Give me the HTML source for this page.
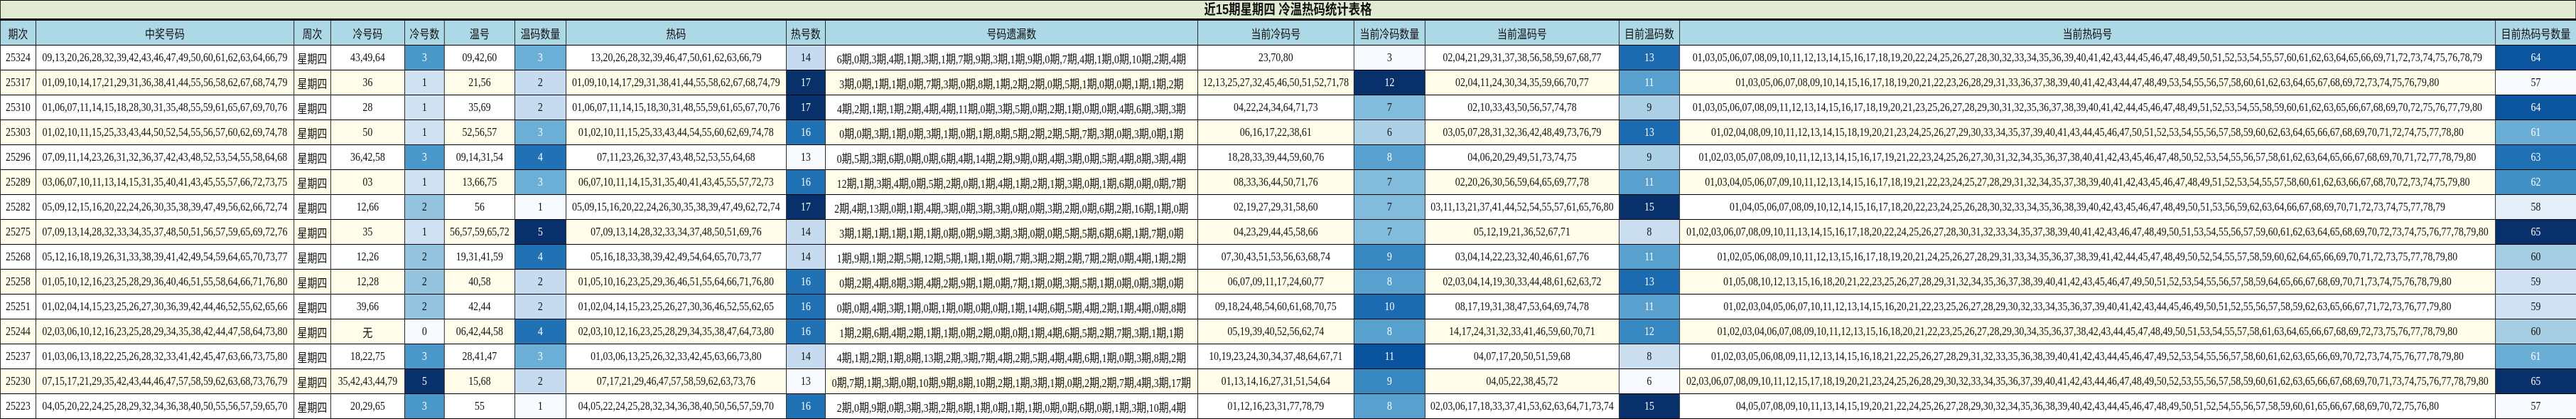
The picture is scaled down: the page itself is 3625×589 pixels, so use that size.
<!DOCTYPE html>
<html><head><meta charset="utf-8">
<style>
html,body{margin:0;padding:0;background:#fff;}
body{width:3625px;height:589px;overflow:hidden;position:relative;font-family:"Liberation Serif","Noto Sans CJK SC",serif;color:#111;}
#wrap{position:absolute;left:0;top:0;width:4420.7px;transform:scaleX(0.82);transform-origin:0 0;}
.title{height:26px;background:#e2ebd2;border:1px solid #000;border-bottom:2px solid #000;box-sizing:border-box;height:28px;text-align:center;font-weight:bold;font-size:20px;line-height:26px;font-family:"Liberation Sans","Noto Sans CJK SC",sans-serif;}
table{border-collapse:collapse;table-layout:fixed;width:4420.7px;}
td,th{border:1px solid #000;text-align:center;font-size:17px;padding:0;white-space:nowrap;overflow:hidden;height:34px;}
th{background:#add8e6;font-weight:normal;font-family:"Liberation Sans","Noto Sans CJK SC",sans-serif;height:34px;}
tr.y td{background:#fffde9;}
td.w{color:#fff;}
</style></head><body>
<div id="wrap">
<div class="title">近15期星期四 冷温热码统计表格</div>
<table>
<colgroup>
<col style="width:61px"><col style="width:442.7px"><col style="width:63.4px"><col style="width:126.8px"><col style="width:68.3px"><col style="width:120.7px"><col style="width:87.8px"><col style="width:378px"><col style="width:67.1px"><col style="width:639px"><col style="width:268.3px"><col style="width:122px"><col style="width:333px"><col style="width:103.7px"><col style="width:1400px"><col style="width:139px">
</colgroup>
<tr><th>期次</th><th>中奖号码</th><th>周次</th><th>冷号码</th><th>冷号数</th><th>温号</th><th>温码数量</th><th>热码</th><th>热号数</th><th>号码遗漏数</th><th>当前冷码号</th><th>当前冷码数量</th><th>当前温码号</th><th>目前温码数</th><th>当前热码号</th><th>目前热码号数量</th></tr>

<tr><td>25324</td><td>09,13,20,26,28,32,39,42,43,46,47,49,50,60,61,62,63,64,66,79</td><td>星期四</td><td>43,49,64</td><td class="w" style="background:#4a98c9">3</td><td>09,42,60</td><td class="w" style="background:#6baed6">3</td><td>13,20,26,28,32,39,46,47,50,61,62,63,66,79</td><td style="background:#c6dbef">14</td><td>6期,0期,3期,4期,1期,3期,1期,7期,9期,3期,1期,9期,0期,7期,4期,1期,0期,10期,2期,4期</td><td>23,70,80</td><td style="background:#f7fbff">3</td><td>02,04,21,29,31,37,38,56,58,59,67,68,77</td><td class="w" style="background:#1c6bb0">13</td><td>01,03,05,06,07,08,09,10,11,12,13,14,15,16,17,18,19,20,22,24,25,26,27,28,30,32,33,34,35,36,39,40,41,42,43,44,45,46,47,48,49,50,51,52,53,54,55,57,60,61,62,63,64,65,66,69,71,72,73,74,75,76,78,79</td><td class="w" style="background:#0b559f">64</td></tr>

<tr class="y"><td>25317</td><td>01,09,10,14,17,21,29,31,36,38,41,44,55,56,58,62,67,68,74,79</td><td>星期四</td><td>36</td><td style="background:#d0e1f2">1</td><td>21,56</td><td style="background:#c6dbef">2</td><td>01,09,10,14,17,29,31,38,41,44,55,58,62,67,68,74,79</td><td class="w" style="background:#08306b">17</td><td>3期,0期,1期,1期,0期,7期,3期,0期,8期,1期,2期,2期,0期,5期,1期,0期,0期,1期,1期,2期</td><td>12,13,25,27,32,45,46,50,51,52,71,78</td><td class="w" style="background:#08306b">12</td><td>02,04,11,24,30,34,35,59,66,70,77</td><td class="w" style="background:#58a1cf">11</td><td>01,03,05,06,07,08,09,10,14,15,16,17,18,19,20,21,22,23,26,28,29,31,33,36,37,38,39,40,41,42,43,44,47,48,49,53,54,55,56,57,58,60,61,62,63,64,65,67,68,69,72,73,74,75,76,79,80</td><td style="background:#f7fbff">57</td></tr>

<tr><td>25310</td><td>01,06,07,11,14,15,18,28,30,31,35,48,55,59,61,65,67,69,70,76</td><td>星期四</td><td>28</td><td style="background:#d0e1f2">1</td><td>35,69</td><td style="background:#c6dbef">2</td><td>01,06,07,11,14,15,18,30,31,48,55,59,61,65,67,70,76</td><td class="w" style="background:#08306b">17</td><td>4期,2期,1期,1期,2期,4期,4期,11期,0期,3期,5期,0期,2期,1期,0期,0期,4期,6期,3期,3期</td><td>04,22,24,34,64,71,73</td><td style="background:#82bbdb">7</td><td>02,10,33,43,50,56,57,74,78</td><td style="background:#abd0e6">9</td><td>01,03,05,06,07,08,09,11,12,13,14,15,16,17,18,19,20,21,23,25,26,27,28,29,30,31,32,35,36,37,38,39,40,41,42,44,45,46,47,48,49,51,52,53,54,55,58,59,60,61,62,63,65,66,67,68,69,70,72,75,76,77,79,80</td><td class="w" style="background:#0b559f">64</td></tr>

<tr class="y"><td>25303</td><td>01,02,10,11,15,25,33,43,44,50,52,54,55,56,57,60,62,69,74,78</td><td>星期四</td><td>50</td><td style="background:#d0e1f2">1</td><td>52,56,57</td><td class="w" style="background:#6baed6">3</td><td>01,02,10,11,15,25,33,43,44,54,55,60,62,69,74,78</td><td class="w" style="background:#2171b5">16</td><td>0期,0期,3期,1期,0期,3期,1期,0期,1期,8期,5期,2期,2期,5期,7期,3期,0期,3期,0期,1期</td><td>06,16,17,22,38,61</td><td style="background:#abd0e6">6</td><td>03,05,07,28,31,32,36,42,48,49,73,76,79</td><td class="w" style="background:#1c6bb0">13</td><td>01,02,04,08,09,10,11,12,13,14,15,18,19,20,21,23,24,25,26,27,29,30,33,34,35,37,39,40,41,43,44,45,46,47,50,51,52,53,54,55,56,57,58,59,60,62,63,64,65,66,67,68,69,70,71,72,74,75,77,78,80</td><td class="w" style="background:#6aaed6">61</td></tr>

<tr><td>25296</td><td>07,09,11,14,23,26,31,32,36,37,42,43,48,52,53,54,55,58,64,68</td><td>星期四</td><td>36,42,58</td><td class="w" style="background:#4a98c9">3</td><td>09,14,31,54</td><td class="w" style="background:#2171b5">4</td><td>07,11,23,26,32,37,43,48,52,53,55,64,68</td><td style="background:#f7fbff">13</td><td>0期,5期,3期,6期,0期,0期,6期,4期,14期,2期,9期,0期,4期,3期,0期,5期,4期,8期,3期,4期</td><td>18,28,33,39,44,59,60,76</td><td class="w" style="background:#58a1cf">8</td><td>04,06,20,29,49,51,73,74,75</td><td style="background:#abd0e6">9</td><td>01,02,03,05,07,08,09,10,11,12,13,14,15,16,17,19,21,22,23,24,25,26,27,30,31,32,34,35,36,37,38,40,41,42,43,45,46,47,48,50,52,53,54,55,56,57,58,61,62,63,64,65,66,67,68,69,70,71,72,77,78,79,80</td><td class="w" style="background:#2070b4">63</td></tr>

<tr class="y"><td>25289</td><td>03,06,07,10,11,13,14,15,31,35,40,41,43,45,55,57,66,72,73,75</td><td>星期四</td><td>03</td><td style="background:#d0e1f2">1</td><td>13,66,75</td><td class="w" style="background:#6baed6">3</td><td>06,07,10,11,14,15,31,35,40,41,43,45,55,57,72,73</td><td class="w" style="background:#2171b5">16</td><td>12期,1期,3期,4期,0期,5期,2期,0期,1期,4期,1期,2期,1期,3期,0期,1期,6期,0期,0期,7期</td><td>08,33,36,44,50,71,76</td><td style="background:#82bbdb">7</td><td>02,20,26,30,56,59,64,65,69,77,78</td><td class="w" style="background:#58a1cf">11</td><td>01,03,04,05,06,07,09,10,11,12,13,14,15,16,17,18,19,21,22,23,24,25,27,28,29,31,32,34,35,37,38,39,40,41,42,43,45,46,47,48,49,51,52,53,54,55,57,58,60,61,62,63,66,67,68,70,72,73,74,75,79,80</td><td class="w" style="background:#4191c6">62</td></tr>

<tr><td>25282</td><td>05,09,12,15,16,20,22,24,26,30,35,38,39,47,49,56,62,66,72,74</td><td>星期四</td><td>12,66</td><td style="background:#94c4df">2</td><td>56</td><td style="background:#f7fbff">1</td><td>05,09,15,16,20,22,24,26,30,35,38,39,47,49,62,72,74</td><td class="w" style="background:#08306b">17</td><td>2期,4期,13期,0期,1期,4期,3期,0期,3期,3期,0期,0期,3期,2期,0期,6期,2期,16期,1期,0期</td><td>02,19,27,29,31,58,60</td><td style="background:#82bbdb">7</td><td>03,11,13,21,37,41,44,52,54,55,57,61,65,76,80</td><td class="w" style="background:#08306b">15</td><td>01,04,05,06,07,08,09,10,12,14,15,16,17,18,20,22,23,24,25,26,28,30,32,33,34,35,36,38,39,40,42,43,45,46,47,48,49,50,51,53,56,59,62,63,64,66,67,68,69,70,71,72,73,74,75,77,78,79</td><td style="background:#e3eef9">58</td></tr>

<tr class="y"><td>25275</td><td>07,09,13,14,28,32,33,34,35,37,48,50,51,56,57,59,65,69,72,76</td><td>星期四</td><td>35</td><td style="background:#d0e1f2">1</td><td>56,57,59,65,72</td><td class="w" style="background:#08306b">5</td><td>07,09,13,14,28,32,33,34,37,48,50,51,69,76</td><td style="background:#c6dbef">14</td><td>3期,1期,1期,1期,1期,1期,0期,0期,9期,3期,3期,0期,0期,5期,5期,6期,6期,1期,7期,0期</td><td>04,23,29,44,45,58,66</td><td style="background:#82bbdb">7</td><td>05,12,19,21,36,52,67,71</td><td style="background:#cadef0">8</td><td>01,02,03,06,07,08,09,10,11,13,14,15,16,17,18,20,22,24,25,26,27,28,30,31,32,33,34,35,37,38,39,40,41,42,43,46,47,48,49,50,51,53,54,55,56,57,59,60,61,62,63,64,65,68,69,70,72,73,74,75,76,77,78,79,80</td><td class="w" style="background:#08306b">65</td></tr>

<tr><td>25268</td><td>05,12,16,18,19,26,31,33,38,39,41,42,49,54,59,64,65,70,73,77</td><td>星期四</td><td>12,26</td><td style="background:#94c4df">2</td><td>19,31,41,59</td><td class="w" style="background:#2171b5">4</td><td>05,16,18,33,38,39,42,49,54,64,65,70,73,77</td><td style="background:#c6dbef">14</td><td>1期,9期,1期,2期,5期,12期,5期,1期,1期,0期,7期,3期,2期,2期,7期,2期,0期,4期,1期,2期</td><td>07,30,43,51,53,56,63,68,74</td><td class="w" style="background:#3787c0">9</td><td>03,04,14,22,23,32,40,46,61,67,76</td><td class="w" style="background:#58a1cf">11</td><td>01,02,05,06,08,09,10,11,12,13,15,16,17,18,19,20,21,24,25,26,27,28,29,31,33,34,35,36,37,38,39,41,42,44,45,47,48,49,50,52,54,55,57,58,59,60,62,64,65,66,69,70,71,72,73,75,77,78,79,80</td><td style="background:#a5cde3">60</td></tr>

<tr class="y"><td>25258</td><td>01,05,10,12,16,23,25,28,29,36,40,46,51,55,58,64,66,71,76,80</td><td>星期四</td><td>12,28</td><td style="background:#94c4df">2</td><td>40,58</td><td style="background:#c6dbef">2</td><td>01,05,10,16,23,25,29,36,46,51,55,64,66,71,76,80</td><td class="w" style="background:#2171b5">16</td><td>0期,2期,4期,8期,3期,4期,2期,9期,1期,0期,7期,1期,0期,3期,5期,1期,0期,0期,3期,0期</td><td>06,07,09,11,17,24,60,77</td><td class="w" style="background:#58a1cf">8</td><td>02,03,04,14,19,30,33,44,48,61,62,63,72</td><td class="w" style="background:#1c6bb0">13</td><td>01,05,08,10,12,13,15,16,18,20,21,22,23,25,26,27,28,29,31,32,34,35,36,37,38,39,40,41,42,43,45,46,47,49,50,51,52,53,54,55,56,57,58,59,64,65,66,67,68,69,70,71,73,74,75,76,78,79,80</td><td style="background:#cfe1f2">59</td></tr>

<tr><td>25251</td><td>01,02,04,14,15,23,25,26,27,30,36,39,42,44,46,52,55,62,65,66</td><td>星期四</td><td>39,66</td><td style="background:#94c4df">2</td><td>42,44</td><td style="background:#c6dbef">2</td><td>01,02,04,14,15,23,25,26,27,30,36,46,52,55,62,65</td><td class="w" style="background:#2171b5">16</td><td>0期,0期,4期,3期,1期,0期,1期,0期,0期,0期,1期,14期,6期,5期,4期,2期,1期,4期,0期,8期</td><td>09,18,24,48,54,60,61,68,70,75</td><td class="w" style="background:#1c6bb0">10</td><td>08,17,19,31,38,47,53,64,69,74,78</td><td class="w" style="background:#58a1cf">11</td><td>01,02,03,04,05,06,07,10,11,12,13,14,15,16,20,21,22,23,25,26,27,28,29,30,32,33,34,35,36,37,39,40,41,42,43,44,45,46,49,50,51,52,55,56,57,58,59,62,63,65,66,67,71,72,73,76,77,79,80</td><td style="background:#cfe1f2">59</td></tr>

<tr class="y"><td>25244</td><td>02,03,06,10,12,16,23,25,28,29,34,35,38,42,44,47,58,64,73,80</td><td>星期四</td><td>无</td><td style="background:#f7fbff">0</td><td>06,42,44,58</td><td class="w" style="background:#2171b5">4</td><td>02,03,10,12,16,23,25,28,29,34,35,38,47,64,73,80</td><td class="w" style="background:#2171b5">16</td><td>1期,2期,6期,4期,2期,1期,1期,0期,2期,0期,0期,1期,4期,6期,5期,2期,7期,3期,1期,1期</td><td>05,19,39,40,52,56,62,74</td><td class="w" style="background:#58a1cf">8</td><td>14,17,24,31,32,33,41,46,59,60,70,71</td><td class="w" style="background:#3787c0">12</td><td>01,02,03,04,06,07,08,09,10,11,12,13,15,16,18,20,21,22,23,25,26,27,28,29,30,34,35,36,37,38,42,43,44,45,47,48,49,50,51,53,54,55,57,58,61,63,64,65,66,67,68,69,72,73,75,76,77,78,79,80</td><td style="background:#a5cde3">60</td></tr>

<tr><td>25237</td><td>01,03,06,13,18,22,25,26,28,32,33,41,42,45,47,63,66,73,75,80</td><td>星期四</td><td>18,22,75</td><td class="w" style="background:#4a98c9">3</td><td>28,41,47</td><td class="w" style="background:#6baed6">3</td><td>01,03,06,13,25,26,32,33,42,45,63,66,73,80</td><td style="background:#c6dbef">14</td><td>4期,1期,2期,1期,8期,13期,2期,3期,7期,4期,2期,5期,4期,4期,6期,1期,0期,3期,8期,2期</td><td>10,19,23,24,30,34,37,48,64,67,71</td><td class="w" style="background:#0a539e">11</td><td>04,07,17,20,50,51,59,68</td><td style="background:#cadef0">8</td><td>01,02,03,05,06,08,09,11,12,13,14,15,16,18,21,22,25,26,27,28,29,31,32,33,35,36,38,39,40,41,42,43,44,45,46,47,49,52,53,54,55,56,57,58,60,61,62,63,65,66,69,70,72,73,74,75,76,77,78,79,80</td><td class="w" style="background:#6aaed6">61</td></tr>

<tr class="y"><td>25230</td><td>07,15,17,21,29,35,42,43,44,46,47,57,58,59,62,63,68,73,76,79</td><td>星期四</td><td>35,42,43,44,79</td><td class="w" style="background:#08306b">5</td><td>15,68</td><td style="background:#c6dbef">2</td><td>07,17,21,29,46,47,57,58,59,62,63,73,76</td><td style="background:#f7fbff">13</td><td>0期,7期,1期,3期,0期,10期,9期,8期,10期,2期,1期,3期,1期,0期,2期,2期,7期,4期,3期,17期</td><td>01,13,14,16,27,31,51,54,64</td><td class="w" style="background:#3787c0">9</td><td>04,05,22,38,45,72</td><td style="background:#f7fbff">6</td><td>02,03,06,07,08,09,10,11,12,15,17,18,19,20,21,23,24,25,26,28,29,30,32,33,34,35,36,37,39,40,41,42,43,44,46,47,48,49,50,52,53,55,56,57,58,59,60,61,62,63,65,66,67,68,69,70,71,73,74,75,76,77,78,79,80</td><td class="w" style="background:#08306b">65</td></tr>

<tr><td>25223</td><td>04,05,20,22,24,25,28,29,32,34,36,38,40,50,55,56,57,59,65,70</td><td>星期四</td><td>20,29,65</td><td class="w" style="background:#4a98c9">3</td><td>55</td><td style="background:#f7fbff">1</td><td>04,05,22,24,25,28,32,34,36,38,40,50,56,57,59,70</td><td class="w" style="background:#2171b5">16</td><td>2期,0期,9期,0期,3期,3期,2期,8期,1期,0期,1期,1期,0期,0期,6期,0期,1期,3期,10期,4期</td><td>01,12,16,23,31,77,78,79</td><td class="w" style="background:#58a1cf">8</td><td>02,03,06,17,18,33,37,41,53,62,63,64,71,73,74</td><td class="w" style="background:#08306b">15</td><td>04,05,07,08,09,10,11,13,14,15,19,20,21,22,24,25,26,27,28,29,30,32,34,35,36,38,39,40,42,43,44,45,46,47,48,49,50,51,52,54,55,56,57,58,59,60,61,65,66,67,68,69,70,72,75,76,80</td><td style="background:#f7fbff">57</td></tr>
</table>
</div>
</body></html>
